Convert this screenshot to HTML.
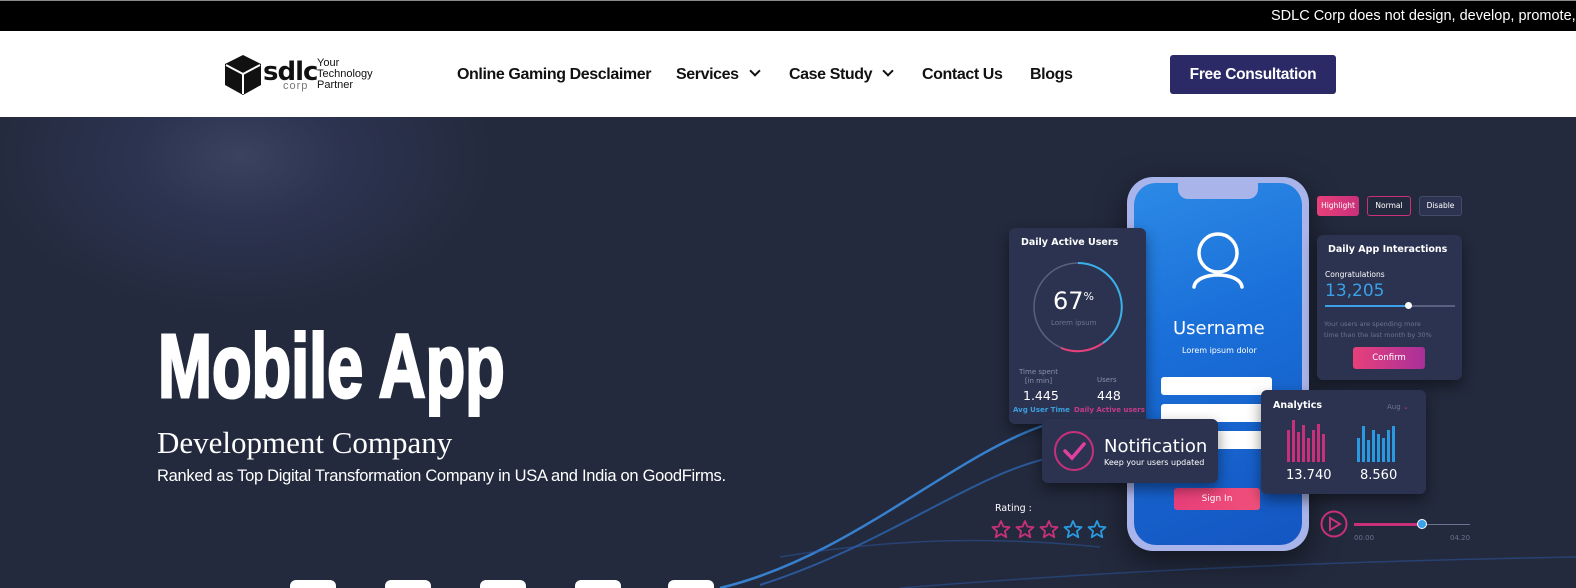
<!DOCTYPE html>
<html><head><meta charset="utf-8"><style>
*{margin:0;padding:0;box-sizing:border-box}
body{width:1576px;height:588px;overflow:hidden;font-family:"Liberation Sans",sans-serif;background:#232a3d;position:relative}
.abs{position:absolute}
.top{left:0;top:0;width:1576px;height:31px;background:#000;border-top:1px solid #888}
.top span{position:absolute;left:1271px;top:7px;color:#fff;font-size:14.5px;white-space:nowrap}
.hdr{left:0;top:31px;width:1576px;height:86px;background:#fff}
.nav{font-size:16px;font-weight:bold;color:#111;top:66px;white-space:nowrap;letter-spacing:-0.4px}
.chev{display:inline-block;width:8px;height:8px;border-right:2px solid #111;border-bottom:2px solid #111;transform:rotate(45deg);margin-left:12px;position:relative;top:-4px}
.btn{left:1170px;top:55px;width:166px;height:39px;background:#2b2966;border-radius:3px;color:#fff;font-weight:bold;font-size:15.5px;text-align:center;line-height:39px;letter-spacing:-0.3px}
.hero{left:0;top:117px;width:1576px;height:471px;background:radial-gradient(ellipse 260px 160px at 240px 40px,#3a4260 0%,#2c3350 40%,rgba(35,42,61,0) 100%),#232a3d;overflow:hidden}
.card{background:#2c3350;border-radius:6px;box-shadow:0 6px 14px rgba(0,0,0,.45);color:#fff;font-family:"DejaVu Sans",sans-serif}
.t{position:absolute;white-space:nowrap}
</style></head><body>
<div class="abs top"><span>SDLC Corp does not design, develop, promote, or</span></div>
<div class="abs hdr"></div>
<svg class="abs" style="left:223px;top:54px" width="40" height="42" viewBox="0 0 40 42"><polygon points="20,1 38,10 38,31 20,41 2,31 2,10" fill="#111"/><polyline points="3,11 20,20 37,11" stroke="#fff" stroke-width="2" fill="none"/><line x1="20" y1="20" x2="20" y2="40" stroke="#fff" stroke-width="2"/></svg>
<div class="abs" style="left:263px;top:57px;font-size:26px;font-weight:900;color:#111;letter-spacing:-1px;font-family:'DejaVu Sans',sans-serif">sdlc</div>
<div class="abs" style="left:283px;top:80px;font-size:11px;color:#777;letter-spacing:1px">corp</div>
<div class="abs" style="left:317px;top:58px;font-size:11px;line-height:11px;color:#111">Your<br>Technology<br>Partner</div>
<div class="abs nav" style="left:457px">Online Gaming Desclaimer</div>
<div class="abs nav" style="left:676px">Services<span class="chev"></span></div>
<div class="abs nav" style="left:789px">Case Study<span class="chev"></span></div>
<div class="abs nav" style="left:922px">Contact Us</div>
<div class="abs nav" style="left:1030px">Blogs</div>
<div class="abs btn">Free Consultation</div>

<div class="abs hero">
<svg class="abs" style="left:0;top:0" width="1576" height="471">
<path d="M720 471 C 850 440, 950 340, 1045 308" stroke="#3b8fe6" stroke-width="2.5" fill="none" opacity=".85"/>
<path d="M760 468 C 880 430, 970 360, 1045 342" stroke="#2f6cc0" stroke-width="2" fill="none" opacity=".7"/>
<path d="M780 440 C 900 420, 1000 420, 1100 430" stroke="#2b5aa8" stroke-width="1.5" fill="none" opacity=".5"/>
<path d="M900 471 C 1100 455, 1300 445, 1576 440" stroke="#2b5aa8" stroke-width="1.5" fill="none" opacity=".5"/>
</svg>
<div class="t" style="left:158px;top:205px;font-weight:bold;font-size:90px;color:#fff;-webkit-text-stroke:3px #fff;transform:scaleX(0.72);transform-origin:left top;letter-spacing:0px;line-height:90px">Mobile App</div>
<div class="t" style="left:157px;top:308px;font-family:'Liberation Serif',serif;font-size:31px;color:#fff">Development Company</div>
<div class="t" style="left:157px;top:350px;font-size:16.5px;color:#fff;letter-spacing:-0.3px">Ranked as Top Digital Transformation Company in USA and India on GoodFirms.</div>
<div class="abs" style="left:290px;top:463px;width:46px;height:20px;background:#fff;border-radius:6px"></div>
<div class="abs" style="left:385px;top:463px;width:46px;height:20px;background:#fff;border-radius:6px"></div>
<div class="abs" style="left:480px;top:463px;width:46px;height:20px;background:#fff;border-radius:6px"></div>
<div class="abs" style="left:575px;top:463px;width:46px;height:20px;background:#fff;border-radius:6px"></div>
<div class="abs" style="left:668px;top:463px;width:46px;height:20px;background:#fff;border-radius:6px"></div>

<div class="abs" style="left:1127px;top:60px;width:182px;height:374px;border-radius:26px;background:#a9b4ea;box-shadow:0 10px 30px rgba(0,0,0,.5)"></div>
<div class="abs" style="left:1134px;top:66px;width:168px;height:362px;border-radius:22px;background:linear-gradient(160deg,#2c8ae6 0%,#1a6fd8 40%,#1456c2 100%)"></div>
<div class="abs" style="left:1178px;top:62px;width:80px;height:20px;border-radius:0 0 10px 10px;background:#a9b4ea"></div>
<svg class="abs" style="left:1188px;top:112px" width="60" height="62" viewBox="0 0 60 62"><circle cx="30" cy="24" r="19" stroke="#fff" stroke-width="3.5" fill="none"/><path d="M6 58 C 8 42, 52 42, 54 58" stroke="#fff" stroke-width="3.5" fill="none" stroke-linecap="round"/></svg>
<div class="t" style="left:1173px;top:201px;font-family:'DejaVu Sans',sans-serif;font-size:18px;color:#fff">Username</div>
<div class="t" style="left:1182px;top:229px;font-family:'DejaVu Sans',sans-serif;font-size:8px;color:#fff">Lorem ipsum dolor</div>
<div class="abs" style="left:1161px;top:260px;width:111px;height:18px;background:#fff;border-radius:3px"></div>
<div class="abs" style="left:1161px;top:287px;width:111px;height:18px;background:#fff;border-radius:3px"></div>
<div class="abs" style="left:1161px;top:314px;width:111px;height:18px;background:#fff;border-radius:3px"></div>
<div class="abs" style="left:1174px;top:371px;width:86px;height:22px;background:linear-gradient(90deg,#e83e7a,#f0507a);border-radius:3px;color:#fff;font-size:9px;text-align:center;line-height:22px;font-family:'DejaVu Sans',sans-serif">Sign In</div>

<div class="abs card" style="left:1009px;top:111px;width:137px;height:196px">
<div class="t" style="left:12px;top:9px;font-size:9.5px;font-weight:bold">Daily Active Users</div>
<svg class="abs" style="left:22px;top:32px" width="94" height="94"><circle cx="47" cy="47" r="44" stroke="#5a6080" stroke-width="1.5" fill="none"/><path d="M47 3 A44 44 0 0 1 72 83" stroke="#3ab0e8" stroke-width="2" fill="none"/><path d="M72 83 A44 44 0 0 1 30 88" stroke="#e8407a" stroke-width="2" fill="none"/></svg>
<div class="t" style="left:44px;top:59px;font-size:24px">67<sup style="font-size:11px">%</sup></div>
<div class="t" style="left:42px;top:91px;font-size:7px;color:#6c7290">Lorem ipsum</div>
<div class="t" style="left:10px;top:140px;font-size:7px;color:#8a90aa;text-align:center;line-height:9px">Time spent<br>[in min]</div>
<div class="t" style="left:88px;top:148px;font-size:7px;color:#8a90aa">Users</div>
<div class="t" style="left:14px;top:160px;font-size:12.5px">1.445</div>
<div class="t" style="left:88px;top:160px;font-size:12.5px">448</div>
<div class="t" style="left:4px;top:178px;font-size:7px;color:#3aa0e0;font-weight:bold">Avg User Time</div>
<div class="t" style="left:65px;top:178px;font-size:7px;color:#c83a8a;font-weight:bold">Daily Active users</div>
</div>

<div class="abs card" style="left:1042px;top:302px;width:176px;height:64px">
<svg class="abs" style="left:11px;top:11px" width="42" height="42"><circle cx="21" cy="21" r="19" stroke="#c8307a" stroke-width="2" fill="none"/><path d="M12 21 L19 28 L31 14" stroke="#e040a0" stroke-width="3.5" fill="none" stroke-linecap="round"/></svg>
<div class="t" style="left:62px;top:17px;font-size:18px">Notification</div>
<div class="t" style="left:62px;top:39px;font-size:8px">Keep your users updated</div>
</div>

<div class="abs" style="left:1317px;top:79px;width:42px;height:20px;border-radius:3px;background:linear-gradient(90deg,#e8407a,#c8307a);color:#fff;font-size:7.5px;line-height:20px;text-align:center;font-family:'DejaVu Sans',sans-serif">Highlight</div>
<div class="abs" style="left:1367px;top:79px;width:44px;height:20px;border-radius:3px;border:1.5px solid #c8307a;color:#fff;font-size:7.5px;line-height:17px;text-align:center;font-family:'DejaVu Sans',sans-serif">Normal</div>
<div class="abs" style="left:1419px;top:79px;width:43px;height:20px;border-radius:3px;border:1px solid #454c6a;background:#2c3350;color:#fff;font-size:7.5px;line-height:18px;text-align:center;font-family:'DejaVu Sans',sans-serif">Disable</div>

<div class="abs card" style="left:1317px;top:118px;width:145px;height:145px">
<div class="t" style="left:11px;top:9px;font-size:9.5px;font-weight:bold">Daily App Interactions</div>
<div class="t" style="left:8px;top:35px;font-size:7.5px">Congratulations</div>
<div class="t" style="left:8px;top:46px;font-size:17px;color:#3aa0e8">13,205</div>
<div class="abs" style="left:8px;top:70px;width:130px;height:2px;background:#5a6080"></div>
<div class="abs" style="left:8px;top:70px;width:84px;height:2px;background:#3aa0e8"></div>
<div class="abs" style="left:88px;top:67px;width:7px;height:7px;border-radius:50%;background:#fff"></div>
<div class="t" style="left:7px;top:84px;font-size:6.5px;line-height:11px;color:#6c7290">Your users are spending more<br>time than the last month by 30%</div>
<div class="abs" style="left:36px;top:112px;width:72px;height:22px;border-radius:3px;background:linear-gradient(90deg,#e8407a,#a8309a);font-size:8.5px;line-height:22px;text-align:center">Confirm</div>
</div>

<div class="abs card" style="left:1261px;top:273px;width:165px;height:104px">
<div class="t" style="left:12px;top:10px;font-size:9.5px;font-weight:bold">Analytics</div>
<div class="t" style="left:126px;top:13px;font-size:7px;color:#6c7290">Aug <span style="color:#c8307a">⌄</span></div>
<svg class="abs" style="left:26px;top:30px" width="120" height="42">
<g fill="#c8307a"><rect x="0" y="10" width="3" height="32"/><rect x="5" y="0" width="3" height="42"/><rect x="10" y="12" width="3" height="30"/><rect x="15" y="5" width="3" height="37"/><rect x="20" y="18" width="3" height="24"/><rect x="25" y="10" width="3" height="32"/><rect x="30" y="4" width="3" height="38"/><rect x="35" y="14" width="3" height="28"/></g>
<g fill="#2a9ae0"><rect x="70" y="18" width="3" height="24"/><rect x="75" y="6" width="3" height="36"/><rect x="80" y="20" width="3" height="22"/><rect x="85" y="10" width="3" height="32"/><rect x="90" y="14" width="3" height="28"/><rect x="95" y="18" width="3" height="24"/><rect x="100" y="10" width="3" height="32"/><rect x="105" y="6" width="3" height="36"/></g>
</svg>
<div class="t" style="left:25px;top:78px;font-size:13px">13.740</div>
<div class="t" style="left:99px;top:78px;font-size:13px">8.560</div>
</div>

<div class="t" style="left:995px;top:386px;font-size:9.5px;color:#fff;font-family:'DejaVu Sans',sans-serif">Rating :</div>
<svg class="abs" style="left:991px;top:402px" width="120" height="22">
<g fill="none" stroke-width="1.8" stroke-linejoin="round">
<path d="M10 2 L12.4 7.6 L18.5 8.2 L13.9 12.2 L15.3 18.2 L10 15 L4.7 18.2 L6.1 12.2 L1.5 8.2 L7.6 7.6 Z" stroke="#c8307a"/>
<path transform="translate(24 0)" d="M10 2 L12.4 7.6 L18.5 8.2 L13.9 12.2 L15.3 18.2 L10 15 L4.7 18.2 L6.1 12.2 L1.5 8.2 L7.6 7.6 Z" stroke="#c8307a"/>
<path transform="translate(48 0)" d="M10 2 L12.4 7.6 L18.5 8.2 L13.9 12.2 L15.3 18.2 L10 15 L4.7 18.2 L6.1 12.2 L1.5 8.2 L7.6 7.6 Z" stroke="#c8307a"/>
<path transform="translate(72 0)" d="M10 2 L12.4 7.6 L18.5 8.2 L13.9 12.2 L15.3 18.2 L10 15 L4.7 18.2 L6.1 12.2 L1.5 8.2 L7.6 7.6 Z" stroke="#2a9ae0"/>
<path transform="translate(96 0)" d="M10 2 L12.4 7.6 L18.5 8.2 L13.9 12.2 L15.3 18.2 L10 15 L4.7 18.2 L6.1 12.2 L1.5 8.2 L7.6 7.6 Z" stroke="#2a9ae0"/>
</g></svg>

<svg class="abs" style="left:1320px;top:393px" width="160" height="40"><circle cx="14" cy="14" r="12.5" stroke="#c8307a" stroke-width="2" fill="none"/><path d="M10 8 L20 14 L10 20 Z" stroke="#c8307a" stroke-width="2" fill="none"/><rect x="34" y="13" width="68" height="3" fill="#c8307a"/><rect x="102" y="14" width="48" height="1" fill="#6c7290"/><circle cx="102" cy="14" r="4.5" fill="#3aa0e8" stroke="#fff" stroke-width="1"/><text x="34" y="30" font-size="7" fill="#6c7290" font-family="DejaVu Sans">00.00</text><text x="130" y="30" font-size="7" fill="#6c7290" font-family="DejaVu Sans">04.20</text></svg>
</div>
</body></html>
